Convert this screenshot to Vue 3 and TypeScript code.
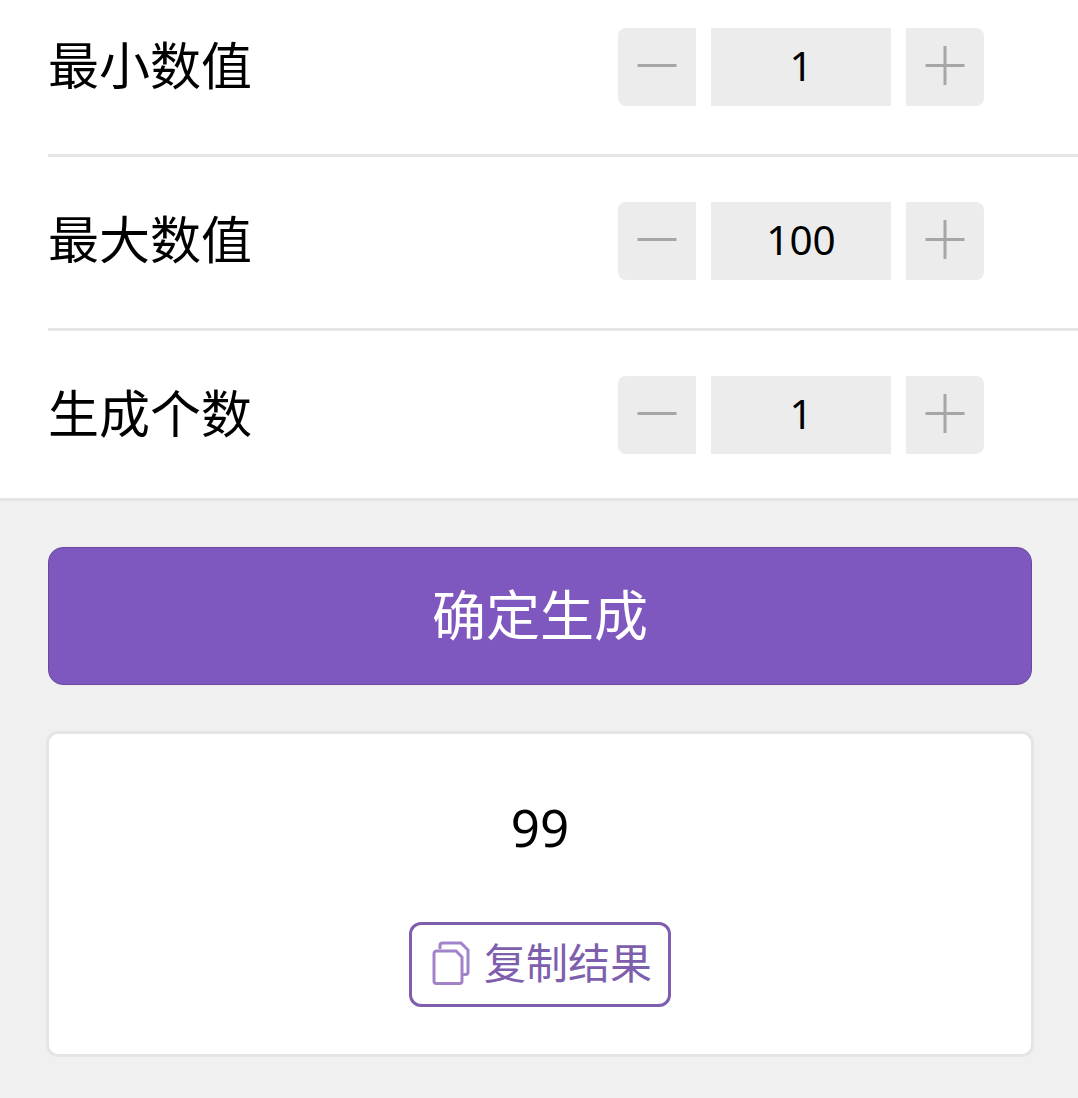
<script setup lang="ts">
interface Row { label: string; value: number }
const rows: Row[] = [
  { label: '最小数值', value: 1 },
  { label: '最大数值', value: 100 },
  { label: '生成个数', value: 1 },
]
</script>

<template>
  <div class="page">
    <section class="panel">
      <div v-for="row in rows" :key="row.label" class="row">
        <span class="label">{{ row.label }}</span>
        <div class="stepper">
          <button class="step left" type="button" aria-label="减少">
            <svg width="78" height="78" viewBox="0 0 78 78"><path d="M19.500 37.500h39" stroke="#a6a6a6" stroke-width="3" fill="none" /></svg>
          </button>
          <div class="value">{{ row.value }}</div>
          <button class="step right" type="button" aria-label="增加">
            <svg width="78" height="78" viewBox="0 0 78 78"><path d="M19.500 37.500h39M39 18v39" stroke="#a6a6a6" stroke-width="3" fill="none" /></svg>
          </button>
        </div>
      </div>
    </section>
    <div class="actions">
      <button class="primary" type="button">确定生成</button>
      <div class="result">
        <div class="number">99</div>
        <button class="copy" type="button">
          <svg class="copy-icon" width="38" height="44" viewBox="0 0 38 44" fill="none" stroke="#a183cc" stroke-width="3">
            <path d="M8 8V4.500a2.500 2.500 0 0 1 2.500-2.500H29l7 7v22a2.500 2.500 0 0 1-2.500 2.500H31" />
            <path d="M4.500 10H24l6 6v24a2.500 2.500 0 0 1-2.500 2.500h-23A2.500 2.500 0 0 1 2 40V12.500A2.500 2.500 0 0 1 4.500 10z" />
          </svg>
          <span>复制结果</span>
        </button>
      </div>
    </div>
  </div>
</template>

<style scoped>
.page {
  width: 1078px;
  height: 1098px;
  overflow: hidden;
  background: #f0f0f1;
  font-family: "Noto Sans", "Noto Sans CJK SC", sans-serif;
  color: #000;
}
.panel {
  background: #fff;
  padding-left: 48px;
  border-bottom: 3px solid #e5e5e5;
}
.row {
  display: flex;
  align-items: flex-start;
  justify-content: space-between;
  box-sizing: border-box;
  height: 174px;
  padding: 45px 94px 0 0;
  border-bottom: 3px solid #e5e5e5;
}
.row:first-child {
  height: 157px;
  padding-top: 28px;
}
.row:last-child {
  border-bottom: 0;
  height: 167px;
}
.label {
  font-size: 51px;
  line-height: 74px;
}
.stepper {
  display: flex;
  gap: 15px;
  height: 78px;
}
.step {
  width: 78px;
  height: 78px;
  padding: 0;
  border: 0;
  background: #ececec;
  display: block;
}
.step svg {
  display: block;
}
.left {
  border-radius: 8px 0 0 8px;
}
.right {
  border-radius: 0 8px 8px 0;
}
.value {
  width: 180px;
  background: #ececec;
  font-size: 40.500px;
  line-height: 76px;
  text-align: center;
}
.actions {
  padding: 46px 46px 0;
}
.primary {
  display: block;
  box-sizing: border-box;
  width: 984px;
  height: 138px;
  margin: 0 2px;
  padding: 0 0 8px;
  border: 1.500px solid #6a4a9e;
  border-radius: 15px;
  background: #7e57bf;
  color: #fff;
  font-family: inherit;
  font-size: 54px;
}
.result {
  box-sizing: border-box;
  width: 988px;
  height: 326px;
  margin-top: 46px;
  background: #fff;
  border: 3px solid #e5e5e5;
  border-radius: 12px;
  display: flex;
  flex-direction: column;
  align-items: center;
}
.number {
  font-size: 51px;
  line-height: 70px;
  margin-top: 58px;
}
.copy {
  box-sizing: border-box;
  width: 262px;
  height: 85px;
  margin-top: 60px;
  padding: 0 0 0 20px;
  border: 3px solid #7e5fae;
  border-radius: 12px;
  background: #fff;
  color: #7e5fae;
  font-family: inherit;
  font-size: 42px;
  display: flex;
  align-items: center;
  gap: 14px;
}
.copy span {
  line-height: 60px;
  margin-top: -4px;
}
.copy-icon {
  flex: none;
  margin-top: -4px;
}
</style>
